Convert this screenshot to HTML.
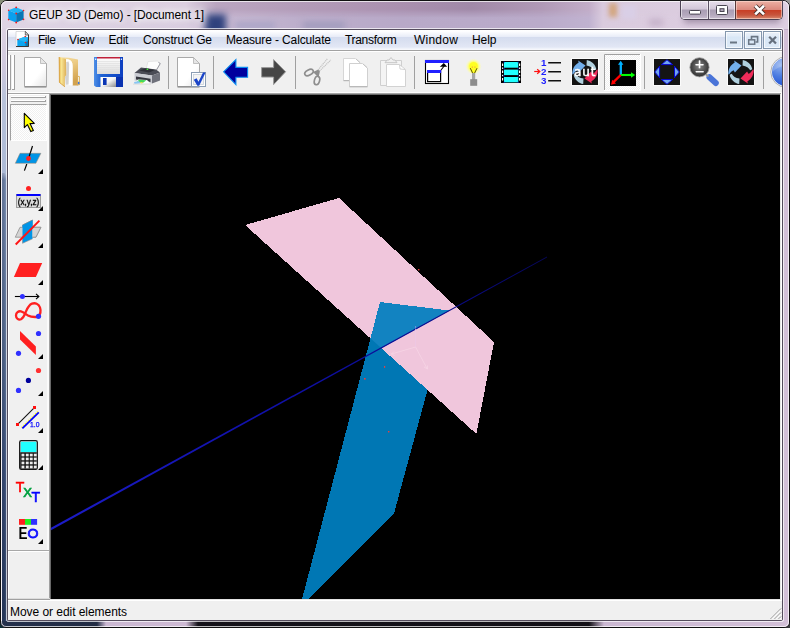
<!DOCTYPE html>
<html><head><meta charset="utf-8"><title>GEUP 3D (Demo) - [Document 1]</title>
<style>
html,body{margin:0;padding:0;}
body{width:790px;height:628px;overflow:hidden;position:relative;font-family:"Liberation Sans",sans-serif;font-size:12px;color:#000;
 background:linear-gradient(to bottom,#8a927c 0,#6f7a78 30px,#2a4048 300px,#0c2c36 628px);}
.abs{position:absolute;}
#win{position:absolute;left:0;top:0;width:788px;height:626px;border:1px solid #101010;border-radius:7px 7px 6px 6px;overflow:hidden;background:#d3c2d7;}
#glass{position:absolute;left:0;top:0;width:788px;height:626px;
 background:linear-gradient(to bottom,#d9cadd 0px,#cdbad2 10px,#c6b0cc 27px,#d6c6da 60px,#d8c9dc 100%);}
.blob{position:absolute;filter:blur(5px);}
#hl{position:absolute;left:0;top:0;width:786px;height:624px;border:1px solid rgba(255,255,255,.72);border-radius:6px 6px 5px 5px;}
#inhl{position:absolute;left:5px;top:27px;width:776px;height:592px;border:1px solid rgba(255,255,255,.7);border-radius:2px;}
#inbd{position:absolute;left:7px;top:29px;width:774px;height:590px;border:1px solid #544c5c;border-radius:2px;background:#f0f0f0;}
#menubar{position:absolute;left:8px;top:30px;width:774px;height:20px;background:linear-gradient(to bottom,#ffffff 0,#fdfdff 1.5px,#e9edf8 6.5px,#d4dbee 6.6px,#d8dff0 10px,#e2e7f5 17px,#eff2fa 18.5px,#f9fafd 20px);border-bottom:1px solid #a2a2a2;border-radius:1px 1px 0 0;}
.mi{position:absolute;top:33px;font-size:12px;line-height:14px;white-space:nowrap;}
#toolbar{position:absolute;left:8px;top:51px;width:774px;height:44px;background:#f0f0f0;border-top:1px solid #fff;box-sizing:border-box;}
.sep{position:absolute;top:56px;width:1px;height:33px;background:#a0a0a0;}
#ltool{position:absolute;left:8px;top:95px;width:41px;height:505px;background:#f0f0f0;}
#canvas{position:absolute;left:51px;top:95px;width:729px;height:504px;background:#000;overflow:hidden;}
#status{position:absolute;left:8px;top:599px;width:774px;height:21px;background:#f0f0f0;border-top:2px solid #fff;box-sizing:border-box;}
#title{position:absolute;left:29px;top:8px;font-size:12px;line-height:14px;white-space:nowrap;letter-spacing:-0.1px;text-shadow:0 0 6px #fff,0 0 9px #fff,0 0 12px rgba(255,255,255,.9);}
.tri{position:absolute;width:0;height:0;border-left:5px solid transparent;border-bottom:5px solid #000;left:38px;}
.ic{position:absolute;overflow:visible;will-change:transform;}
</style></head><body>
<div class="abs" style="left:782px;top:0;width:8px;height:8px;background:#989898"></div><div class="abs" style="left:782px;top:620px;width:8px;height:8px;background:#3a3a3e"></div><div class="abs" style="left:0;top:620px;width:8px;height:8px;background:#0c2c36"></div><div class="abs" style="left:0;top:0;width:8px;height:8px;background:#868e78"></div>
<div id="win">
<div id="glass"></div>
<div class="abs" style="left:0;top:0;width:788px;height:28px;background:linear-gradient(to right,#e0d5e4 0,#dccfe0 185px,#bba6c1 215px,#b39bb8 300px,#aa90af 400px,#a189a8 470px,#b099b6 540px,#c2adc8 588px,#d9cadd 602px,#deD0e2 788px)"></div>
<div class="abs" style="left:0;top:0;width:788px;height:28px;background:linear-gradient(to right,#dfd4e4 0,#d9cde0 185px,#c6b7d1 230px,#bcaecb 300px,#b8a9c8 400px,#baabca 540px,#c0b2d0 588px,#dacbde 602px,#decfe2 788px);-webkit-mask-image:linear-gradient(to bottom,transparent 0,transparent 8px,#000 17px,#000 29px);mask-image:linear-gradient(to bottom,transparent 0,transparent 8px,#000 17px,#000 29px)"></div>
<!-- blurred things seen through glass -->
<div class="blob" style="left:204px;top:13px;width:21px;height:22px;background:#2f417c;filter:blur(3.5px)"></div>
<div class="blob" style="left:234px;top:21px;width:40px;height:7px;background:#a9a4c6;filter:blur(3px)"></div>
<div class="blob" style="left:302px;top:21px;width:42px;height:7px;background:#9f9abc;filter:blur(3px)"></div>
<div class="blob" style="left:608px;top:2px;width:8px;height:14px;background:#d2a47c;filter:blur(2.5px)"></div>
<div class="blob" style="left:621px;top:4px;width:14px;height:14px;background:#d9cfe6;filter:blur(2.5px)"></div>
<div class="blob" style="left:648px;top:18px;width:14px;height:7px;background:#c4b0c8;filter:blur(3px)"></div>
<!-- left frame -->
<div class="abs" style="left:1px;top:27px;width:6px;height:148px;background:linear-gradient(to bottom,#ddd2e2 0,#cfc8de 40px,#b9c2da 70px,#acb9d5 145px)"></div>
<div class="abs" style="left:1px;top:172px;width:6px;height:452px;background:linear-gradient(to bottom,#acb9d5 0,#7487ac 7px,#6b7fa4 60px,#566b90 180px,#3c507a 300px,#2a3c60 440px)"></div>
<div class="abs" style="left:1px;top:172px;width:6px;height:452px;background:linear-gradient(to right,rgba(0,0,20,.12) 0,rgba(0,0,20,.12) 2px,rgba(255,255,255,.0) 3px,rgba(255,255,255,.16) 5px)"></div>
<!-- bottom frame -->
<div class="abs" style="left:0;top:620px;width:788px;height:8px;background:linear-gradient(to right,#24304c 0,#222c44 96px,#cbb8d2 105px,#cdb9d3 185px,#15131a 197px,#121016 588px,#cbb8d2 603px,#d2bfd7 788px)"></div>
<!-- right frame -->
<div class="abs" style="left:782px;top:29px;width:6px;height:592px;background:#d2bfd7"></div>
<div id="hl"></div>
<div id="inhl"></div>
</div>
<div id="inbd"></div>
<div id="title">GEUP 3D (Demo) - [Document 1]</div>
<div id="menubar"></div>
<div class="mi" style="left:38px;letter-spacing:-0.5px">File</div>
<div class="mi" style="left:69px;letter-spacing:-0.1px">View</div>
<div class="mi" style="left:108.5px;letter-spacing:-0.25px">Edit</div>
<div class="mi" style="left:143px;letter-spacing:-0.15px">Construct Ge</div>
<div class="mi" style="left:226px;letter-spacing:-0.13px">Measure - Calculate</div>
<div class="mi" style="left:345px;letter-spacing:-0.32px">Transform</div>
<div class="mi" style="left:414px;letter-spacing:0.23px">Window</div>
<div class="mi" style="left:472px;letter-spacing:-0.1px">Help</div>
<div id="toolbar"></div>
<div class="abs" style="left:8px;top:92px;width:774px;height:1px;background:#fcfcfc"></div>
<div class="abs" style="left:8px;top:93px;width:774px;height:1px;background:#a4a4a4"></div>
<div class="abs" style="left:8px;top:94px;width:41px;height:1px;background:#fff"></div>
<div class="abs" style="left:49px;top:94px;width:733px;height:1px;background:#696969"></div>
<div id="ltool"></div>
<!-- caption buttons -->
<div class="abs" style="left:684px;top:14px;width:96px;height:9px;background:rgba(90,70,100,.45);filter:blur(3px)"></div>
<div class="abs" style="left:680px;top:0;width:103px;height:20px;box-sizing:border-box;border:1px solid #4b4254;border-top:1px solid #2a2a2a;border-radius:0 0 5px 5px;overflow:hidden;background:#fff">
 <div class="abs" style="left:0;top:0;width:27px;height:18px;background:linear-gradient(to bottom,#e8dfec 0,#d2c7d8 8px,#aa9eb4 9px,#b4a8bd 14px,#cabed1 18px);box-shadow:inset 0 0 0 1px rgba(255,255,255,.55)"></div>
 <div class="abs" style="left:27px;top:0;width:1px;height:18px;background:#5a5062"></div>
 <div class="abs" style="left:28px;top:0;width:26px;height:18px;background:linear-gradient(to bottom,#e8dfec 0,#d2c7d8 8px,#aa9eb4 9px,#b4a8bd 14px,#cabed1 18px);box-shadow:inset 0 0 0 1px rgba(255,255,255,.55)"></div>
 <div class="abs" style="left:54px;top:0;width:1px;height:18px;background:#5a3a3a"></div>
 <div class="abs" style="left:55px;top:0;width:46px;height:18px;background:linear-gradient(to bottom,#ecb0a4 0,#da877b 9px,#c83f26 9.5px,#c7553d 14px,#d98a70 18px);box-shadow:inset 0 0 0 1px rgba(255,225,215,.55)"></div>
</div>
<svg class="ic" style="left:680px;top:0" width="103" height="20" viewBox="680 0 103 20">
 <rect x="689.5" y="10.5" width="11" height="3.6" rx=".8" fill="#fff" stroke="#4a4652" stroke-width="1"/>
 <rect x="716.500" y="5.500" width="11" height="9" rx="1" fill="#fff" stroke="#4a4652" stroke-width="1"/>
 <rect x="720" y="8.700" width="4" height="2.800" fill="#b4a8bd" stroke="#4a4652" stroke-width="1"/>
 <g stroke-linecap="butt"><path d="M755.2,5.8 L764,14.4 M764,5.8 L755.2,14.4" stroke="#4e3530" stroke-width="4.4"/>
 <path d="M755.2,5.8 L764,14.4 M764,5.8 L755.2,14.4" stroke="#fff" stroke-width="2.6"/></g>
</svg>
<!-- MDI buttons -->
<div class="abs" style="left:725px;top:31px;width:16px;height:16px;border:1px solid #8497ad;background:linear-gradient(to bottom,#eaf1fa 0,#e2ecf8 4px,#d9e7f6 5px,#dce9f7 16px);box-shadow:inset 0 0 0 1px rgba(255,255,255,.7)"></div>
<div class="abs" style="left:744px;top:31px;width:16px;height:16px;border:1px solid #8497ad;background:linear-gradient(to bottom,#eaf1fa 0,#e2ecf8 4px,#d9e7f6 5px,#dce9f7 16px);box-shadow:inset 0 0 0 1px rgba(255,255,255,.7)"></div>
<div class="abs" style="left:763px;top:31px;width:16px;height:16px;border:1px solid #8497ad;background:linear-gradient(to bottom,#eaf1fa 0,#e2ecf8 4px,#d9e7f6 5px,#dce9f7 16px);box-shadow:inset 0 0 0 1px rgba(255,255,255,.7)"></div>
<svg class="ic" style="left:725px;top:31px" width="56" height="18" viewBox="725 31 56 18">
 <rect x="730" y="41.5" width="7" height="2" fill="#6a7684"/>
 <path d="M751.5,39.5 L751.5,36.6 L757.6,36.6 L757.6,42 L755.5,42" fill="none" stroke="#6a7684" stroke-width="1.6"/>
 <rect x="748.7" y="39.8" width="6" height="4.4" fill="none" stroke="#6a7684" stroke-width="1.5"/>
 <path d="M769.2,36.7 L776,43.6 M776,36.7 L769.2,43.6" stroke="#66707e" stroke-width="2.2"/>
</svg>
<!-- title cube icon + menu doc icon -->
<svg class="ic" style="left:0;top:0" width="60" height="50" viewBox="0 0 60 50">
<path d="M8.500,10.200 L16.200,7.300 L23.600,10.400 L16.200,13.600 Z" fill="#1fb4f6"/>
<path d="M8.300,10.200 L16.200,13.600 L16.200,22.600 L8.300,19.600 Z" fill="#0aa0ee"/>
<path d="M16.200,13.600 L23.600,10.400 L23.600,19.400 L16.200,22.600 Z" fill="#0a76b4"/>
<g fill="#ff1414"><circle cx="16.200" cy="7.400" r=".9"/><circle cx="8.700" cy="10.300" r=".8"/><circle cx="23.500" cy="10.500" r=".8"/><circle cx="16.200" cy="13.500" r=".9"/><circle cx="8.600" cy="19.600" r=".8"/><circle cx="23.500" cy="19.400" r=".8"/><circle cx="16.200" cy="22.500" r=".9"/></g>
<!-- doc -->
<path d="M16,31.500 L25.300,31.500 L28.600,35 L28.600,46.300 L16,46.300 Z" fill="#fff" stroke="#c8c8cc" stroke-width=".7"/>
<path d="M16,46.500 L28.800,46.500 M28.500,35 L28.500,46.500" stroke="#3a3a3a" stroke-width="1" fill="none"/>
<path d="M25.300,31.300 L28.700,35 L25.300,35 Z" fill="#dcdcdc" stroke="#3a3a3a" stroke-width=".7"/>
<path d="M17.300,39.600 L25.300,36.400 L28,37.400 L28,46 L17.300,46 Z" fill="#0aa6f2"/>
<path d="M25.500,42.500 L28,41 L28,46 L25.500,46 Z" fill="#0a76b4"/>
<path d="M17.300,39.600 L25.300,36.400 L28,37.500 L25.400,42.300 Z" fill="#27b6f6"/>
<g fill="#ff1414"><circle cx="25.300" cy="36.500" r=".8"/><circle cx="18" cy="39.500" r=".8"/><circle cx="25.400" cy="42.500" r=".8"/></g>
</svg>

<!-- toolbar grips -->
<div class="abs" style="left:8px;top:55px;width:2px;height:34px;background:#fff;border-right:1px solid #a0a0a0;border-bottom:1px solid #a0a0a0"></div>
<div class="abs" style="left:12px;top:55px;width:2px;height:34px;background:#fff;border-right:1px solid #a0a0a0;border-bottom:1px solid #a0a0a0"></div>
<div class="sep" style="left:168px"></div><div class="sep" style="left:213px"></div><div class="sep" style="left:295px"></div><div class="sep" style="left:414px"></div><div class="sep" style="left:644px"></div><div class="sep" style="left:763px"></div>
<svg class="ic" style="left:8px;top:51px" width="774" height="43" viewBox="8 51 774 43">
<defs>
<pattern id="dith" width="2" height="2" patternUnits="userSpaceOnUse"><rect width="2" height="2" fill="#f0f0f0"/><rect width="1" height="1" fill="#fff"/><rect x="1" y="1" width="1" height="1" fill="#fff"/></pattern>
<linearGradient id="pg" x1="0" y1="0" x2="1" y2="1"><stop offset="0" stop-color="#fff"/><stop offset=".6" stop-color="#fff"/><stop offset="1" stop-color="#e4e4e4"/></linearGradient>
<linearGradient id="fold" x1="0" y1="0" x2="1" y2="0"><stop offset="0" stop-color="#e9b850"/><stop offset=".35" stop-color="#f8e490"/><stop offset="1" stop-color="#dcae58"/></linearGradient>
<linearGradient id="fold2" x1="0" y1="0" x2=".3" y2="1"><stop offset="0" stop-color="#f6dfa4"/><stop offset=".4" stop-color="#eccb84"/><stop offset="1" stop-color="#d2a24e"/></linearGradient>
<linearGradient id="flop" x1="0" y1="0" x2="1" y2="0"><stop offset="0" stop-color="#4f8fe6"/><stop offset=".25" stop-color="#1e62d4"/><stop offset="1" stop-color="#0d3fc0"/></linearGradient>
<linearGradient id="metal" x1="0" y1="0" x2="1" y2="1"><stop offset="0" stop-color="#fff"/><stop offset=".5" stop-color="#f4f4f4"/><stop offset="1" stop-color="#8c8c8c"/></linearGradient>
<linearGradient id="lbl" x1="0" y1="0" x2="0" y2="1"><stop offset="0" stop-color="#fff"/><stop offset="1" stop-color="#dcdcdc"/></linearGradient>
<radialGradient id="zg" cx=".5" cy=".45" r=".6"><stop offset="0" stop-color="#8a8a8a"/><stop offset=".6" stop-color="#4a4a4a"/><stop offset="1" stop-color="#2a2a2a"/></radialGradient>
<radialGradient id="sph" cx=".3" cy=".25" r=".9"><stop offset="0" stop-color="#8fb0ee"/><stop offset=".45" stop-color="#4b7be0"/><stop offset="1" stop-color="#1846d0"/></radialGradient>
<radialGradient id="glow" cx=".5" cy=".5" r=".5"><stop offset="0" stop-color="#ffff30"/><stop offset=".55" stop-color="#ffff60"/><stop offset="1" stop-color="#ffffc0" stop-opacity="0"/></radialGradient>
</defs>
<!-- new doc -->
<path d="M24.5,57.5 L40.5,57.5 L46.5,63.5 L46.5,86.5 L24.5,86.5 Z" fill="url(#pg)" stroke="#a9a9a9" stroke-width="1"/>
<path d="M40.5,57.5 L40.5,63.5 L46.5,63.5 Z" fill="#e6e6e6" stroke="#b4b4b4" stroke-width=".8"/>
<path d="M24.5,87 L46.5,87" stroke="#7c7c7c" stroke-width="1"/>
<!-- folder -->
<path d="M59.500,57.200 L69,57.800 L78,59.500 L78,85.500 L72.500,85.500 L72.500,66 C72.500,62 71,60 68,59.500 L59.500,58.500 Z" fill="url(#fold2)"/>
<path d="M77.500,75.500 L80,76.500 L80,85 L77.500,85.500 Z" fill="#dcb464"/>
<rect x="78.100" y="77" width="1" height="4.500" fill="#f6f2e4"/>
<rect x="77.900" y="82" width="1.500" height="2.100" fill="#3c78e8"/>
<path d="M66,59.300 L69,59.600 C71.500,60.500 72.600,62.500 72.600,66 L72.600,85.600 L66.500,85 L65,77 L66.300,75 Z" fill="#fff"/>
<path d="M66.300,62 L68.500,61.500 L69.200,64 L68.600,84.500 L66,84.800 L65,77 L66.300,75 Z" fill="#d2d2d2"/>
<path d="M58.900,56.900 L66,59.200 L66.300,75 L64.900,76.900 L64.900,87 L59.200,82.400 Z" fill="url(#fold)"/>
<path d="M59.200,57 L59.400,82.400 L64.900,86.800" fill="none" stroke="#d49a3c" stroke-width=".8"/>
<!-- floppy -->
<path d="M94,57 L123,57 L123,87 L96,87 L94,85.5 Z" fill="url(#flop)"/>
<rect x="97" y="57" width="23" height="17" fill="url(#lbl)"/>
<rect x="97" y="57" width="23" height="1.5" fill="#c0203a"/>
<g stroke="#e0e0e0" stroke-width=".7"><path d="M97,61.5h23M97,63.5h23M97,65.5h23M97,67.5h23M97,69.5h23M97,71.5h23"/></g>
<rect x="95" y="58.5" width="1.3" height="1.5" fill="#dfe8ff"/><rect x="120.8" y="58.5" width="1.3" height="1.5" fill="#dfe8ff"/>
<rect x="100.5" y="77" width="15.5" height="10" fill="url(#metal)"/>
<rect x="103" y="78" width="3.6" height="7" fill="#0a36b4"/>
<rect x="116" y="77" width="7" height="10" fill="#0a32b0"/>
<!-- printer -->
<path d="M148,61.5 L158,61 L160,64 L155.5,70.5 L146,69.5 Z" fill="#fdfdfd" stroke="#d8d8d8" stroke-width=".6"/>
<path d="M158.5,62.5 L160.3,63.5 L156.5,70" fill="none" stroke="#9a9aa4" stroke-width="1"/>
<path d="M134.5,73 L141,67.5 L156,69.5 L160,72.5 L152,75.5 Z" fill="#4a4c56"/>
<path d="M139,70.5 L146,68.3 L155,70 L149,72.6 Z" fill="#2e3038"/>
<rect x="146.6" y="68.6" width="1.6" height="1.3" fill="#4cff3c"/>
<path d="M134.5,73 L152,75.5 L152,83.5 L134.5,80.5 Z" fill="#c9cbd2"/>
<path d="M152,75.5 L160,72.5 L160,80.5 L152,83.5 Z" fill="#6f717b"/>
<path d="M136,76.5 L150.5,78.8 L150.5,82 L136,79.5 Z" fill="#35373f"/>
<path d="M138,79.5 L147,80 L150,83 L135,84 Z" fill="#fafcff"/>
<path d="M139,79.7 L146.5,80.2 L143,82.8 L136.5,82.6 Z" fill="#46d85a"/>
<path d="M134,82 L139,81 L140.5,83.5 L134.5,84 Z" fill="#8cc6f2"/>
<rect x="140.5" y="82" width="2" height="1.5" fill="#e6e04a"/>
<path d="M133,84.2 L151,84.2" stroke="#dcdcdc" stroke-width="1"/>
<!-- doc + check -->
<path d="M177.5,57.5 L193.5,57.5 L199.5,63.5 L199.5,86.5 L177.5,86.5 Z" fill="url(#pg)" stroke="#a9a9a9" stroke-width="1"/>
<path d="M193.5,57.5 L193.5,63.5 L199.5,63.5 Z" fill="#e6e6e6" stroke="#b4b4b4" stroke-width=".8"/>
<path d="M177.5,87 L199.5,87" stroke="#7c7c7c" stroke-width="1"/>
<rect x="191.5" y="72.5" width="14" height="14" fill="#fff" stroke="#8a9db4" stroke-width="1"/>
<rect x="193.5" y="74.5" width="10" height="10" fill="#f4f4f4" stroke="#c8d0da" stroke-width=".8"/>
<path d="M193.800,79.800 L196.600,78.200 L198.500,81.800 L203,72.400 L205.600,72.400 L199.200,85.800 L197.300,85.800 Z" fill="#1b45c8"/>
<!-- blue left arrow -->
<path d="M223.6,71.8 L235.9,59.6 L235.9,67.4 L247.6,67.4 L247.6,77.3 L235.9,77.3 L235.9,84.6 Z" fill="#00009e" stroke="#0a8cf0" stroke-width="1.1" stroke-linejoin="miter"/>
<!-- grey right arrow -->
<path d="M285.6,71.8 L273.6,59.6 L273.6,67.6 L261.6,67.6 L261.6,77.1 L273.6,77.1 L273.6,84.6 Z" fill="#464646" stroke="#9a9a9a" stroke-width="1"/>
<!-- scissors (disabled) -->
<g fill="none" stroke="#8e8e8e" stroke-width="1.7">
<ellipse cx="309" cy="72.5" rx="4.6" ry="2.6" transform="rotate(-28 309 72.5)"/>
<ellipse cx="317" cy="80.5" rx="2.6" ry="4.3" transform="rotate(14 317 80.5)"/>
</g>
<path d="M313,72 L318.5,69.5 L320,71 L318.5,77.5 Z" fill="#8e8e8e"/>
<path d="M318,70 L327.6,58.5 M319.5,71 L330.8,60" stroke="#c2c2c2" stroke-width="1.2" stroke-dasharray="1.2 .7"/>
<!-- copy (disabled) -->
<path d="M343.5,58.5 L355.5,58.5 L360.5,63 L360.5,80.5 L343.5,80.5 Z" fill="#fff" stroke="#d6d6d6" stroke-width="1"/>
<path d="M343.5,80.7 L349,80.7" stroke="#b0b0b0"/>
<path d="M349.5,63.5 L362.5,63.5 L367.5,68 L367.5,86.5 L349.5,86.5 Z" fill="#fff" stroke="#d0d0d0" stroke-width="1"/>
<path d="M349.5,86.8 L367.5,86.8" stroke="#b0b0b0"/>
<path d="M356,59 L360,62.6 M363,64 L367,67.6" stroke="#c4c4c4" stroke-width="1"/>
<!-- paste (disabled) -->
<path d="M380.500,60.500 L401.500,60.500 L401.500,85.500 L380.500,85.500 Z" fill="#f4f4f4" stroke="#cfcfcf" stroke-width="1"/>
<path d="M385,62.700 L387,60 L389,60 L391,57.500 L393,60 L395,60 L397,62.700 Z" fill="#f0f0f0" stroke="#c6c6c6" stroke-width="1"/>
<path d="M386.500,64.500 L399.500,64.500 L405.500,69.500 L405.500,86.500 L386.500,86.500 Z" fill="#fff" stroke="#d2d2d2" stroke-width="1"/>
<path d="M399.500,65 L400,69 L405,69.500" fill="none" stroke="#c9c9c9" stroke-width=".8"/>
<!-- window icon -->
<rect x="425.500" y="60.500" width="23" height="23" fill="#fff" stroke="#000" stroke-width="1.1"/>
<rect x="425" y="60" width="24" height="3" fill="#2020ff"/>
<rect x="427.600" y="70.600" width="13" height="11" fill="#fff" stroke="#000" stroke-width="1.2"/>
<rect x="427" y="70" width="14.200" height="3" fill="#2020ff"/>
<path d="M441,70 L445,65" stroke="#000" stroke-width="1.1"/>
<path d="M439.800,66.800 L443.800,63 L447.200,66.800 Z" fill="#000"/>
<!-- bulb -->
<circle cx="473.500" cy="66.500" r="8.200" fill="url(#glow)"/>
<path d="M469.500,67 A4.200,4.200 0 1 1 477.700,67 L475.500,73 L471.700,73 Z" fill="#ffff20"/>
<path d="M470.300,68.200 L472.600,73 M477,68.200 L474.600,73" stroke="#4a4010" stroke-width=".9"/>
<rect x="471.700" y="66.600" width="1.300" height="1" fill="#f0a040"/><rect x="474.300" y="66.600" width="1.300" height="1" fill="#f0a040"/>
<rect x="472" y="73" width="3.200" height="7" fill="#a6a6a6"/>
<rect x="470.200" y="79.200" width="7" height="6.600" fill="#8c8c8c"/>
<!-- film -->
<rect x="501" y="61" width="20" height="22" fill="#000"/>
<rect x="504" y="62" width="14.300" height="5.700" fill="#20ffff"/><rect x="504" y="69.600" width="14.300" height="5.500" fill="#20ffff"/><rect x="504" y="77" width="14.300" height="5.300" fill="#20ffff"/>
<g fill="#fff"><rect x="502" y="63.500" width="1.200" height="2.500"/><rect x="502" y="67.500" width="1.200" height="1.400"/><rect x="502" y="70.500" width="1.200" height="2.500"/><rect x="502" y="74.800" width="1.200" height="1.400"/><rect x="502" y="78" width="1.200" height="2.500"/>
<rect x="519" y="63.500" width="1.200" height="2.500"/><rect x="519" y="67.500" width="1.200" height="1.400"/><rect x="519" y="70.500" width="1.200" height="2.500"/><rect x="519" y="74.800" width="1.200" height="1.400"/><rect x="519" y="78" width="1.200" height="2.500"/></g>
<g fill="#1414e0"><rect x="503.600" y="61.600" width="1" height="1"/><rect x="517.600" y="61.600" width="1" height="1"/><rect x="503.600" y="81.800" width="1" height="1"/><rect x="517.600" y="81.800" width="1" height="1"/><rect x="503.600" y="68" width="1" height="1.200"/><rect x="517.600" y="68" width="1" height="1.200"/><rect x="503.600" y="75.400" width="1" height="1.200"/><rect x="517.600" y="75.400" width="1" height="1.200"/></g>
<!-- 123 list -->
<g font-family="Liberation Sans,sans-serif" font-weight="bold" font-size="9.800" fill="#2020ff" text-anchor="middle"><text x="543.800" y="66">1</text><text x="543.800" y="75">2</text><text x="543.800" y="84">3</text></g>
<g stroke="#111" stroke-width="1.500"><path d="M548.200,62.700 h12.800 M548.200,71.700 h12.800 M548.200,80.700 h12.800"/></g>
<path d="M534.200,71.500 h5" stroke="#ff1010" stroke-width="1.200"/><path d="M537.200,69.300 L539.800,71.500 L537.200,73.700" fill="none" stroke="#ff1010" stroke-width="1.200"/>
<!-- aut icon -->
<g transform="translate(572,59)">
<rect x="-.5" y="-.5" width="27" height="27" fill="#141414" stroke="#fbfbfb" stroke-width="1"/>
<path d="M6.100,1.400 L13.500,6.400 L6.900,13.500 L5.600,11.200 C4.400,11.600 3.400,12.500 2.600,13.600 L.900,15.600 L.300,15.300 C.200,11 1.800,6.500 6.700,3.600 Z" fill="#73afeb"/>
<path d="M6.100,1.400 L13.500,6.400 L6.900,13.500 L5.600,11.200 C4.400,11.600 3.400,12.500 2.600,13.600 L.900,15.600 L.300,15.300 C.200,11 1.800,6.500 6.700,3.600 Z" fill="#f02c5a" transform="rotate(180 13 13)"/>
<path d="M14.800,1 C19,1.800 23.500,5 24.300,10.300 L22.200,11.300 C21,8.800 18.500,7 14.500,6.400 Z" fill="#b0d0de"/>
<path d="M14.800,1 C19,1.800 23.500,5 24.300,10.300 L22.200,11.300 C21,8.800 18.500,7 14.500,6.400 Z" fill="#b0d0de" transform="rotate(180 13 13)"/>
<text x="13.200" y="17.300" font-family="DejaVu Sans,Liberation Sans,sans-serif" font-size="12" fill="#fff" stroke="#fff" stroke-width=".45" text-anchor="middle" letter-spacing=".9">aut</text>
</g>
<!-- checked axis button -->
<rect x="604" y="54" width="37" height="37" fill="url(#dith)"/>
<path d="M604.500,90 L604.500,54.500 L640,54.500" fill="none" stroke="#a0a0a0" stroke-width="1"/>
<path d="M604,90.500 L640.500,90.500 L640.500,54" fill="none" stroke="#fff" stroke-width="1"/>
<rect x="610" y="60" width="26" height="26" fill="#000"/>
<path d="M620.800,75 L620.800,64" stroke="#00b0ff" stroke-width="2.300"/><path d="M618,64.800 L620.700,60.800 L623.400,64.800 Z" fill="#00b0ff"/>
<path d="M620.700,75 L632,75" stroke="#00ff00" stroke-width="2.100"/><path d="M631,72.200 L635.200,75 L631,77.800 Z" fill="#00ff00"/>
<path d="M620.700,75 L613.500,82.200" stroke="#ff0000" stroke-width="2.400"/><path d="M611,84.800 L612.200,79.800 L616,83.600 Z" fill="#ff0000"/>
<!-- pan icon -->
<rect x="653.500" y="58.500" width="27" height="27" fill="#141414" stroke="#fbfbfb" stroke-width="1"/>
<g fill="#70a4f0" stroke="#0808d8" stroke-width="1"><path d="M667,59.800 L672.600,64.600 L661.400,64.600 Z"/><path d="M667,84.300 L672.600,79.500 L661.400,79.500 Z"/><path d="M654.800,72 L659.600,66.200 L659.600,77.800 Z"/><path d="M679.300,72 L674.500,66.200 L674.500,77.800 Z"/></g>
<!-- zoom icon -->
<path d="M709.500,77.300 L715.800,83" stroke="#4a74d8" stroke-width="6" stroke-linecap="round"/>
<path d="M705,73.500 L708.500,76.500" stroke="#9a9a9a" stroke-width="2"/>
<circle cx="699.500" cy="67.300" r="9.600" fill="url(#zg)" stroke="#9c9c9c" stroke-width=".8"/>
<text x="699.500" y="69.300" font-family="Liberation Sans,sans-serif" font-size="15.500" fill="#fff" stroke="#fff" stroke-width=".3" text-anchor="middle">+</text><text x="699.600" y="76.700" font-family="Liberation Sans,sans-serif" font-size="15.500" fill="#fff" stroke="#fff" stroke-width=".3" text-anchor="middle">−</text>
<!-- rotate icon -->
<g transform="translate(728,59)">
<rect x="-.5" y="-.5" width="27" height="27" fill="#141414" stroke="#fbfbfb" stroke-width="1"/>
<path d="M6.100,1.400 L13.500,6.400 L6.900,13.500 L5.600,11.200 C4.400,11.600 3.400,12.500 2.600,13.600 L.900,15.600 L.300,15.300 C.200,11 1.800,6.500 6.700,3.600 Z" fill="#73afeb"/>
<path d="M6.100,1.400 L13.500,6.400 L6.900,13.500 L5.600,11.200 C4.400,11.600 3.400,12.500 2.600,13.600 L.900,15.600 L.300,15.300 C.200,11 1.800,6.500 6.700,3.600 Z" fill="#f02c5a" transform="rotate(180 13 13)"/>
<path d="M14.800,1 C19,1.800 23.500,5 24.300,10.300 L22.200,11.300 C21,8.800 18.500,7 14.500,6.400 Z" fill="#b0d0de"/>
<path d="M14.800,1 C19,1.800 23.500,5 24.300,10.300 L22.200,11.300 C21,8.800 18.500,7 14.500,6.400 Z" fill="#b0d0de" transform="rotate(180 13 13)"/>
</g>
<!-- sphere -->
<clipPath id="sc"><rect x="764" y="52" width="18" height="40"/></clipPath>
<g clip-path="url(#sc)"><circle cx="786" cy="72" r="15.200" fill="#fff" stroke="#9a9a9a" stroke-width=".8"/><circle cx="786" cy="72" r="14" fill="url(#sph)"/>
<path d="M772.500,70 A14,14 0 0 1 786,58 L786,66 Q778,66 772.500,72 Z" fill="#fff" opacity=".18"/></g>
</svg>

<!-- left toolbar chrome -->
<div class="abs" style="left:8px;top:95px;width:1px;height:504px;background:#fff"></div>
<div class="abs" style="left:47px;top:95px;width:2px;height:455px;background:#fafafa"></div>
<div class="abs" style="left:49px;top:93px;width:1px;height:507px;background:#a0a0a0"></div>
<div class="abs" style="left:50px;top:94px;width:1px;height:505px;background:#696969"></div>
<div class="abs" style="left:11px;top:96px;width:34px;height:1px;background:#fff;border-right:1px solid #a0a0a0;border-bottom:1px solid #a0a0a0"></div>
<div class="abs" style="left:11px;top:100px;width:34px;height:1px;background:#fff;border-right:1px solid #a0a0a0;border-bottom:1px solid #a0a0a0"></div>
<div class="abs" style="left:10px;top:104px;width:36px;height:36px;background:repeating-conic-gradient(#fff 0 25%,#f0f0f0 0 50%) 0 0/2px 2px;border-left:1px solid #a0a0a0;border-top:1px solid #a0a0a0;border-right:1px solid #fff;border-bottom:1px solid #fff;box-sizing:content-box;width:35px;height:35px"></div>
<div class="abs" style="left:8px;top:550px;width:41px;height:1px;background:#a8a8a8"></div>
<div class="abs" style="left:8px;top:551px;width:41px;height:1px;background:#fff"></div>
<div class="abs" style="left:8px;top:598px;width:42px;height:1px;background:#dcdcdc"></div>
<div class="tri" style="top:169px"></div><div class="tri" style="top:206px"></div><div class="tri" style="top:243px"></div><div class="tri" style="top:280px"></div>
<div class="tri" style="top:354px"></div><div class="tri" style="top:391px"></div><div class="tri" style="top:428px"></div><div class="tri" style="top:465px"></div><div class="tri" style="top:539px"></div>
<svg class="ic" style="left:8px;top:95px" width="43" height="504" viewBox="8 95 43 504">
<!-- cursor -->
<path d="M24.300,113.300 L24.300,127.600 L27.400,124.600 L30.800,131.600 L33.400,130.400 L30,123.600 L34.300,123.400 Z" fill="#ffff00" stroke="#000" stroke-width="1.100" stroke-linejoin="round"/>
<!-- plane + perpendicular -->
<path d="M32.500,146 L29.200,156.500 M26.800,164 L24.400,170.600" stroke="#000" stroke-width="1.200"/>
<path d="M20,153.300 L40.900,153.300 L35.900,163.300 L15.300,163.300 Z" fill="#0094e6" stroke="#a08068" stroke-width=".5"/>
<path d="M30.200,153.300 L28.700,158" stroke="#000" stroke-width="1.200"/>
<circle cx="28.500" cy="158.500" r="2.400" fill="#ff2020"/>
<!-- xyz -->
<circle cx="28.500" cy="188.500" r="2.500" fill="#ff2020"/>
<rect x="16.500" y="194.500" width="24" height="13" fill="#dcdcdc" stroke="#9c9c9c" stroke-width="1"/>
<rect x="16.500" y="194" width="24" height="2" fill="#0000ff"/>
<text x="28.500" y="205" font-family="Liberation Sans,sans-serif" font-size="9.500" font-weight="normal" stroke="#000" stroke-width=".35" text-anchor="middle" fill="#000" textLength="21.500" lengthAdjust="spacingAndGlyphs">(x,y,z)</text>
<!-- planes intersect -->
<path d="M22.500,225 L32.500,220 L32.500,230 L22.500,230 Z" fill="#0094e6" stroke="#8a8a8a" stroke-width=".5"/>
<path d="M20,227.300 L40.900,227.300 L35.900,237.200 L15.300,237.200 Z" fill="#d4d4d4" stroke="#8e8e8e" stroke-width=".8"/>
<path d="M22.500,225 L32.500,220 L32.500,238.800 L22.500,243.300 Z" fill="#0094e6" />
<path d="M32.500,227.300 L40.900,227.300 L35.900,237.200 L32.500,237.200 Z" fill="#d4d4d4"/>
<path d="M32.500,227.300 L40.900,227.300 L35.900,237.200 L32.500,237.200" fill="none" stroke="#8e8e8e" stroke-width=".8"/>
<path d="M22.500,225 L32.500,220 M22.500,243.300 L32.500,238.800 M22.500,237.200 L22.500,243.300" stroke="#8a8a8a" stroke-width=".6" fill="none"/>
<path d="M39.400,220.600 L15.700,244.500" stroke="#ff1414" stroke-width="1.900"/>
<!-- red parallelogram -->
<path d="M20,263 L42.200,263 L35.900,276.900 L13.900,276.900 Z" fill="#ff2020"/>
<!-- arrow + loop -->
<path d="M14.900,296.500 L38.600,296.500" stroke="#000" stroke-width="1.100"/>
<path d="M36,293.800 L38.900,296.500 L36,299.200" fill="none" stroke="#000" stroke-width="1.100"/>
<circle cx="22.400" cy="296.500" r="2.500" fill="#3030ff"/>
<path d="M38.500,316.800 C40.400,314 40.800,310 40,307.500 C38.800,303.600 35,302.600 32,303.700 C28.500,305 27,309 25.500,312.500 C24.500,315 23.500,318 21,319.300 C18.500,320.300 16,318.500 16,315.500 C16,312.500 18.500,310.800 21,311.400 C23.500,312 25.500,314 28,315.500 C31,317.200 35,317.200 38.500,316.800" fill="none" stroke="#ff2020" stroke-width="2.300"/>
<circle cx="38.500" cy="316.300" r="2.600" fill="#3030ff"/>
<!-- red band + dots -->
<path d="M20,331 L35.900,346.500 L35.900,355 L20,339.600 Z" fill="#ff2020"/>
<circle cx="38.500" cy="333.500" r="2.600" fill="#3030ff"/><circle cx="18.500" cy="353.300" r="2.600" fill="#3030ff"/>
<!-- three dots -->
<circle cx="38.500" cy="370.500" r="2.600" fill="#ff3030"/><circle cx="28.400" cy="380.400" r="2.600" fill="#00009c"/><circle cx="18.500" cy="390.400" r="2.600" fill="#3030ff"/>
<!-- measure -->
<path d="M17.600,424.400 L34.400,407.600" stroke="#111" stroke-width="1.100"/>
<rect x="16" y="423" width="3" height="3" fill="#ff1010"/><rect x="33" y="406" width="3" height="3" fill="#ff1010"/>
<path d="M21.600,427.600 L38,411.500" stroke="#ffff00" stroke-width="1.600" stroke-dasharray="1.200 1.200"/>
<path d="M22.400,428.400 L38.800,412.300" stroke="#0000ff" stroke-width="1.800"/>
<text x="30" y="427.100" font-family="Liberation Sans,sans-serif" font-size="7.500" fill="#0000ff" stroke="#0000ff" stroke-width=".25" textLength="9.400" lengthAdjust="spacingAndGlyphs">1.0</text>
<!-- calculator -->
<rect x="19.700" y="440.600" width="17.600" height="28.800" rx="1.600" fill="#dcdcdc" stroke="#141414" stroke-width="1.300"/>
<rect x="20.800" y="441.800" width="15.500" height="10.300" fill="#20ffff"/>
<rect x="20.300" y="452.300" width="16.400" height="16.400" fill="#111"/>
<g fill="#ececec"><rect x="21.5" y="453.7" width="2.900" height="2.700"/><rect x="25.8" y="453.7" width="2.900" height="2.700"/><rect x="29.8" y="453.7" width="2.900" height="2.700"/><rect x="33.8" y="453.7" width="2.900" height="2.700"/><rect x="21.5" y="457.6" width="2.900" height="2.700"/><rect x="25.8" y="457.6" width="2.900" height="2.700"/><rect x="29.8" y="457.6" width="2.900" height="2.700"/><rect x="33.8" y="457.6" width="2.900" height="2.700"/><rect x="21.5" y="461.6" width="2.900" height="2.700"/><rect x="25.8" y="461.6" width="2.900" height="2.700"/><rect x="29.8" y="461.6" width="2.900" height="2.700"/><rect x="33.8" y="461.6" width="2.900" height="2.700"/><rect x="21.5" y="465.6" width="2.900" height="2.700"/><rect x="25.8" y="465.6" width="2.900" height="2.700"/><rect x="29.8" y="465.6" width="2.900" height="2.700"/><rect x="33.8" y="465.6" width="2.900" height="2.700"/></g>
<!-- TXT -->
<g font-family="Liberation Sans,sans-serif" font-weight="normal">
<text x="20" y="492" font-size="14" fill="#ff0000" stroke="#ff0000" stroke-width=".6" text-anchor="middle">T</text>
<text x="27.500" y="496.800" font-size="13" fill="#00a040" stroke="#00a040" stroke-width=".7" text-anchor="middle">X</text>
<text x="35.900" y="501.800" font-size="14" fill="#0000ff" stroke="#0000ff" stroke-width=".6" text-anchor="middle">T</text>
</g>
<!-- EO -->
<rect x="19" y="519" width="6" height="5.800" fill="#ff2020"/><rect x="25" y="519" width="6" height="5.800" fill="#20f020"/><rect x="31" y="519" width="6.100" height="5.800" fill="#3030ff"/>
<text x="18.500" y="539" font-family="Liberation Sans,sans-serif" font-weight="bold" font-size="16" fill="#000" textLength="9" lengthAdjust="spacingAndGlyphs">E</text>
<text x="27.500" y="538.300" font-family="Liberation Sans,sans-serif" font-size="13.500" fill="#1010ff" stroke="#1010ff" stroke-width=".8" textLength="11" lengthAdjust="spacingAndGlyphs">O</text>
</svg>

<div id="canvas">
<svg width="729" height="504" viewBox="51 95 729 504" style="position:absolute;left:0;top:0">
<defs>
<clipPath id="below"><polygon points="51,530 547,257 800,118 800,700 51,700"/></clipPath>
<clipPath id="pinkclip"><polygon points="245,225 339,198 494,342 476.400,434"/></clipPath>
<linearGradient id="lg" gradientUnits="userSpaceOnUse" x1="51" y1="530" x2="547" y2="257">
<stop offset="0" stop-color="#1c1cc8"/><stop offset="0.45" stop-color="#1010a8"/><stop offset="0.8" stop-color="#0a0a8c"/><stop offset="1" stop-color="#06065a"/></linearGradient>
</defs>
<g shape-rendering="crispEdges">
<polygon points="245,225 339,198 494,342 476.400,434" fill="#f0c6dc"/>
<polygon points="380,302 449,310.5 394,513.5 299.7,608" fill="#0077b4"/>
<g clip-path="url(#pinkclip)"><polygon points="380,302 449,310.5 394,513.5 299.7,608" fill="#1283c1"/></g>
<g clip-path="url(#below)"><polygon points="245,225 339,198 494,342 476.400,434" fill="#f0c6dc"/></g>
</g>
<polygon points="50,528.200 547,256.600 547,257.400 50,530.800" fill="url(#lg)"/>
<!-- faint axis glyph -->
<g stroke-width="0.8" fill="none"><path d="M415.600,347 L415.600,329" stroke="#ecc6e6"/><path d="M415.600,328.500 L415.600,326" stroke="#9090e8"/><path d="M415.600,347 L391.500,354 M394,351.500 L391.500,354 L394.500,355.500 M415.600,347 L427,368.500 M424,367 L427.500,369 L427.500,365.500" stroke="#f6d4e4"/></g>
<g fill="#e84040"><rect x="418" y="269" width="1.4" height="1.4"/><rect x="384" y="366" width="1.2" height="1.8"/><rect x="364" y="378" width="1.6" height="1.6"/><rect x="388" y="431" width="1.4" height="1.4"/></g>
</svg>
</div>
<div class="abs" style="left:780px;top:94px;width:1px;height:506px;background:#e3e3e3"></div><div class="abs" style="left:781px;top:93px;width:1px;height:508px;background:#fff"></div>
<div id="status"><div class="abs" style="left:2px;top:4px;font-size:12px;line-height:14px;letter-spacing:-0.05px">Move or edit elements</div></div>
<div class="abs" style="left:8px;top:599px;width:42px;height:1px;background:#a0a0a0"></div><div class="abs" style="left:50px;top:599px;width:731px;height:1px;background:#e3e3e3"></div>
<!-- resize grip -->
<svg class="ic" style="left:768px;top:606px" width="14" height="14" viewBox="0 0 14 14">
<g stroke="#8e8e8e" stroke-width="1"><path d="M13,2.5 L2.5,13 M13,6.5 L6.5,13 M13,10.5 L10.5,13"/></g>
<g stroke="#fff" stroke-width="1"><path d="M13,3.7 L3.7,13 M13,7.7 L7.7,13 M13,11.7 L11.7,13"/></g>
</svg>
</body></html>
